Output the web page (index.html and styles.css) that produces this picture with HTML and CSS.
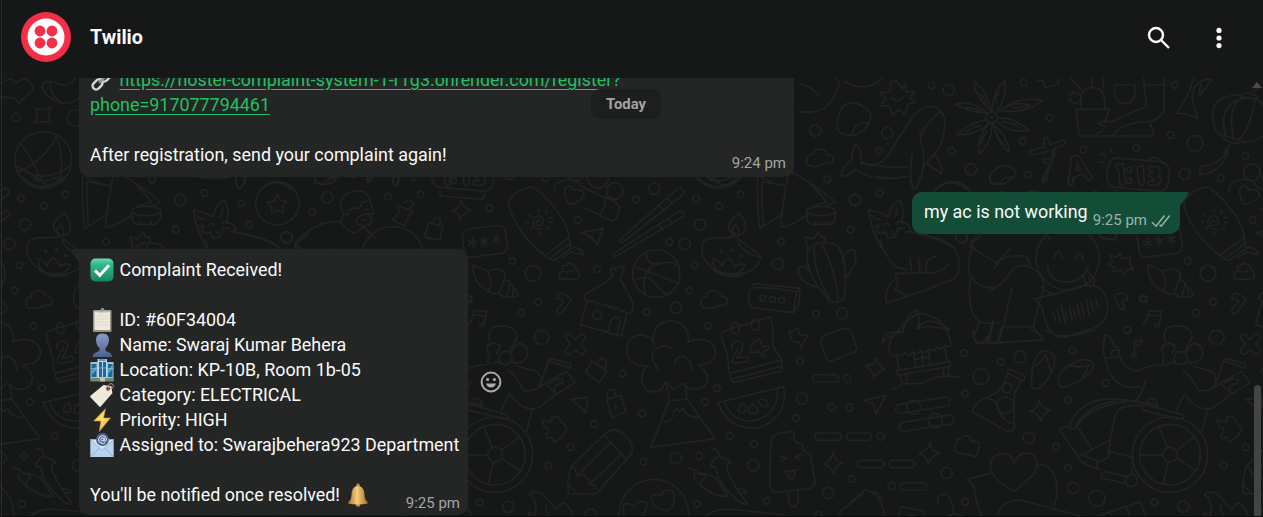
FILE: index.html
```html
<!DOCTYPE html>
<html lang="en">

<head>
    <meta charset="UTF-8">
    <meta name="viewport" content="width=device-width, initial-scale=1.0">
    <title>Twilio</title>
    <link rel="stylesheet" href="styles.css">
</head>

<body>
    <div class="chat">
        <header class="chat-header">
            <svg class="avatar" viewBox="0 0 50 50">
                <circle cx="25" cy="25" r="25" fill="#f22f46" />
                <circle cx="25" cy="25" r="18.5" fill="#fff" />
                <g fill="#f22f46">
                    <circle cx="19" cy="19" r="5.4" />
                    <circle cx="31" cy="19" r="5.4" />
                    <circle cx="19" cy="31" r="5.4" />
                    <circle cx="31" cy="31" r="5.4" />
                </g>
            </svg>
            <div class="chat-name">Twilio</div>
            <svg class="icon icon-search" viewBox="0 0 24 24">
                <circle cx="9" cy="9" r="7" />
                <path d="M14 14l8 8" />
            </svg>
            <svg class="icon icon-menu" viewBox="0 0 6 22">
                <circle cx="3" cy="3.4" r="2.6" />
                <circle cx="3" cy="11" r="2.6" />
                <circle cx="3" cy="18.6" r="2.6" />
            </svg>
        </header>

        <main class="chat-body">
            <!-- doodle wallpaper, one tile repeated every 675px -->
            <svg class="wallpaper" viewBox="0 78 1263 439">
                <defs>
                    <g id="tile">
                        <!-- middle: surfboard, ball, lamp, cactus -->
                        <g transform="translate(460 170) scale(.33333)">
                            <rect x="9" y="172" width="130" height="84" rx="20" transform="rotate(-7 74 214)" />
                            <path d="M38 205v28M26 212l24 14M26 226l24-14M73 200v28M61 207l24 14M61 221l24-14M109 194v28M97 201l24 14M97 215l24-14" />
                            <path d="M148 92Q165 65 205 52Q220 48 235 62Q305 125 325 185L333 235L285 270Q268 272 255 256Q185 205 155 130Q143 107 148 92ZM255 256L325 205M270 265L330 222M330 235Q355 225 372 253Q350 255 335 245L310 262" />
                            <path d="M240 155q-8-8-12 2q2 15 17 8q12-14-3-26q-22-5-24 17q4 26 28 21M238 117v9M262 124l-5 8M276 141l-9 4M278 158l-9-1M270 180l-7-7M238 185v10M212 180l6-8M198 157h9M205 133l8 6" />
                            <path d="M285 68Q275 40 310 32Q350 20 365 50L435 83Q480 95 477 120Q470 155 455 152L375 115M315 55Q330 38 342 60Q370 55 374 75Q365 95 328 104Q310 80 315 55M435 83Q440 110 422 128" />
                            <path d="M365 188L429 175L413 223L395 203ZM477 212L650 58Q665 48 673 66L668 75L488 217Q478 221 477 212ZM458 252L655 125Q675 118 673 138L470 258Q458 262 458 252ZM597 104l14 16M621 84l16 17M596 163l11 19M624 145l12 18" />
                            <circle cx="589" cy="311" r="71" />
                            <path d="M525 290L655 340M560 247Q560 290 600 281Q630 272 650 285M586 280Q535 320 558 375M525 330Q565 310 590 345Q605 370 625 372" />
                            <path d="M727 225Q730 200 785 203Q825 205 825 190Q810 193 805 170Q810 145 838 129Q860 155 856 178Q845 200 825 198M818 193Q810 178 828 165Q840 180 834 193M832 205Q865 230 902 256Q900 305 825 315Q750 310 728 255Q725 240 727 225M832 208Q840 245 900 262M760 265Q758 310 800 311Q850 315 855 283Q835 280 825 290Q818 270 803 263Q787 275 788 290Q775 270 760 265M760 298Q790 325 845 318" />
                            <circle cx="782" cy="243" r="3" />
                            <circle cx="814" cy="240" r="3" />
                            <circle cx="842" cy="257" r="3" />
                            <path d="M893 20Q890 120 900 175L963 135M905 35L978 48M905 35Q905 100 910 165M985 15Q970 80 962 170Q985 175 1040 135M985 0L1045 35L1127 95L1100 108M1045 35L1100 95L1055 110" />
                            <ellipse cx="1083" cy="123" rx="43" ry="14" />
                            <path d="M1040 123Q1038 164 1060 163H1108Q1130 158 1127 123M1068 153v10M1098 153v10" />
                            <path d="M1043 235L1036 200L1052 205L1062 205L1075 184L1083 200L1096 203L1092 220M1043 240Q1030 310 1110 393Q1135 405 1155 380Q1165 220 1110 220Q1065 210 1043 240M1062 230Q1060 310 1108 385M1085 225Q1125 290 1135 390M1050 305Q1030 280 1015 295Q1010 335 1075 353M1148 270Q1155 240 1180 238Q1205 270 1155 325" />
                            <path d="M38 292Q36 280 50 290Q65 295 80 302Q94 320 92 345L85 362Q45 350 38 292M80 305Q110 290 128 303Q142 315 130 335L118 370Q100 378 85 362M132 330Q150 330 150 345L140 380Q130 385 118 370M151 342Q165 350 158 380L140 380M165 355Q174 370 175 378L158 380" />
                            <path d="M297 325Q295 305 310 303Q302 290 315 285Q325 290 323 278Q345 282 350 300Q360 310 358 320Q352 333 297 325M310 303Q330 310 340 300" />
                            <path d="M378 392Q367 380 380 370L440 335L458 320L452 300Q458 285 466 302Q470 285 480 292Q495 285 492 302L480 325L517 395Q523 425 510 430L498 430Q490 415 485 425Q475 408 465 418Q455 405 447 412Q438 398 430 407Q420 395 410 402Q400 385 390 397ZM380 397L362 464L484 499L500 430M443 486L452 455Q460 435 478 445Q483 450 472 492" />
                            <circle cx="412" cy="435" r="13" />
                            <path d="M290 385Q290 365 310 372L335 388L308 425Q295 440 290 420L312 394L292 385M24 465Q35 460 42 422L80 424L72 468Q60 475 58 463L70 460M40 435L76 438" />
                            <path d="M724 405Q717 385 738 380Q740 360 762 363Q780 363 782 378Q803 378 803 395Q800 410 780 405Q765 418 745 413Q728 420 724 405" />
                            <path d="M876 345L890 341L1020 355L1016 405L1000 428L875 413Q863 405 868 360Q870 343 1010 365L1000 428M1010 365L1020 355" />
                            <circle cx="908" cy="384" r="9" />
                            <circle cx="937" cy="388" r="9" />
                            <circle cx="965" cy="391" r="9" />
                            <circle cx="89" cy="114" r="10" />
                            <circle cx="353" cy="149" r="10" />
                            <circle cx="464" cy="63" r="25" />
                            <circle cx="414" cy="22" r="32" />
                            <circle cx="583" cy="56" r="17" />
                            <circle cx="528" cy="88" r="10" />
                            <circle cx="708" cy="85" r="10" />
                            <circle cx="777" cy="108" r="10" />
                            <circle cx="842" cy="74" r="10" />
                            <circle cx="720" cy="164" r="17" />
                            <circle cx="628" cy="216" r="10" />
                            <circle cx="674" cy="222" r="17" />
                            <circle cx="157" cy="273" r="10" />
                            <circle cx="219" cy="310" r="24" />
                            <circle cx="411" cy="297" r="10" />
                            <circle cx="703" cy="286" r="10" />
                            <circle cx="963" cy="215" r="10" />
                            <circle cx="954" cy="282" r="17" />
                            <circle cx="1172" cy="178" r="10" />
                            <circle cx="1185" cy="90" r="17" />
                            <circle cx="1102" cy="28" r="10" />
                            <circle cx="688" cy="362" r="10" />
                            <circle cx="234" cy="396" r="10" />
                            <circle cx="184" cy="428" r="10" />
                            <circle cx="648" cy="413" r="17" />
                            <circle cx="560" cy="426" r="10" />
                            <circle cx="1068" cy="432" r="10" />
                            <circle cx="1147" cy="430" r="17" />
                            <circle cx="745" cy="468" r="10" />
                            <circle cx="27" cy="387" r="10" />
                            <path d="M710 20Q770 80 840 20M740 20Q775 45 815 20M890 0Q900 35 978 48" />
                        </g>
                        <!-- bottom: volcano, calendar, pencil, ice cream -->
                        <g transform="translate(460 330) scale(.33333)">
                            <path d="M233 2h24l12 20l-12 20h-24l-12-20ZM317 22Q310 12 330 12L346 28L362 12Q380 14 375 26L362 43L377 58Q375 74 362 73L346 58L330 73Q312 74 317 58L331 43Z" />
                            <path d="M395 93L440 123L418 157L377 127ZM413 97Q415 85 432 86Q445 92 436 110L430 117M440 208L483 195L497 245L455 263ZM443 205Q435 180 455 178Q468 185 466 198" />
                            <circle cx="467" cy="231" r="4" />
                            <path d="M563 107Q510 110 500 65Q500 15 545 15Q580 20 582 45Q570 -20 630 -28Q690 -20 685 35Q740 15 765 55Q775 100 715 105M560 107Q530 150 560 180Q600 200 617 155M717 107Q760 140 730 170Q695 190 667 160L640 178L618 155L628 212L572 352L766 326L680 207L677 160M597 120Q560 75 590 55Q610 42 635 55M643 98Q650 78 670 80Q695 88 695 120M628 213L680 207M612 275Q635 280 643 242Q650 230 658 245Q670 225 675 248Q690 262 715 263" />
                            <path d="M785 25Q780 5 800 0L930 -40Q945 0 937 45L965 90Q970 120 960 125L820 158Q805 130 803 80ZM807 130L967 90M812 148L960 110" />
                            <path d="M817 55Q810 35 835 33Q855 38 845 60L830 85L862 78Q870 90 860 95L825 100Q812 98 820 82L835 55M878 40L898 25L908 52L925 48Q930 60 910 64L915 80Q905 87 899 66L872 68Q868 58 878 40" />
                            <path d="M775 218L971 170Q985 260 900 292Q805 305 775 218M795 218Q815 275 880 273Q955 255 953 180M838 245Q828 230 850 220Q865 240 850 249ZM870 250Q862 230 878 222Q905 240 885 252ZM900 222Q890 208 905 207Q925 210 923 228Q910 235 900 222" />
                            <path d="M332 208L381 202Q382 220 377 249L360 230ZM247 270L268 276Q280 275 275 258L295 262L320 295Q318 315 283 337L275 322Q255 330 258 312Q270 310 265 295Q250 295 247 270" />
                            <path d="M325 492Q320 450 333 410L432 315Q460 285 495 315Q525 345 515 370L408 492ZM333 410Q350 415 350 438Q380 425 388 460Q408 465 408 475M325 465L352 492M358 430L455 335M388 463L485 372M432 315L500 390" />
                            <circle cx="582" cy="552" r="104" />
                            <path d="M490 530Q490 510 523 530Q535 505 560 520Q565 550 515 580Q485 560 490 530M575 515Q565 490 603 495Q615 470 642 487Q650 525 623 542Q590 540 575 515" />
                            <path d="M685 415Q705 415 715 430Q745 430 768 445L805 500Q760 500 720 465Q700 450 702 430M715 430Q740 435 735 445Q720 450 725 462M755 355Q775 355 777 380Q800 385 814 400Q795 395 803 425Q825 475 862 520Q850 530 820 500Q775 460 765 410L752 410Q755 385 777 380M830 475Q855 475 860 487L840 490" />
                            <path d="M932 340Q935 305 975 308Q1005 300 1003 312Q998 325 1010 340Q1030 335 1028 355Q1035 370 1050 372L1065 450Q1065 475 1045 476L950 487Q930 485 930 460ZM985 485L988 520Q1000 540 1014 520V482M960 377L978 385L962 393M1023 373L1006 382L1023 388M973 425L1012 420M980 427Q980 447 995 447Q1005 443 1003 423M990 430v8" />
                            <path d="M1118 367Q1125 395 1148 398Q1125 405 1122 434Q1112 405 1087 402Q1115 395 1118 367M1085 45Q1078 25 1095 15L1155 -5Q1170 -10 1175 10L1190 55Q1190 65 1175 70L1115 93Q1105 95 1100 85ZM987 5L1015 -5L1018 15L1044 15L1022 53L1018 37L997 33Z" />
                            <rect x="1058" y="134" width="78" height="22" rx="11" />
                            <rect x="1065" y="309" width="78" height="22" rx="11" />
                            <rect x="1159" y="309" width="76" height="22" rx="11" />
                            <path d="M208 495Q220 480 245 492Q265 510 290 540Q295 525 310 518Q335 535 342 565M210 495Q235 510 225 565L208 545L204 565M260 525Q250 545 275 565" />
                            <path d="M735 560Q765 530 835 540L975 555M1140 560V545L1210 490" />
                            <circle cx="487" cy="130" r="10" />
                            <circle cx="546" cy="250" r="10" />
                            <circle cx="403" cy="282" r="10" />
                            <circle cx="332" cy="352" r="10" />
                            <circle cx="266" cy="407" r="10" />
                            <circle cx="59" cy="517" r="10" />
                            <circle cx="145" cy="530" r="17" />
                            <circle cx="393" cy="553" r="17" />
                            <circle cx="550" cy="395" r="10" />
                            <circle cx="647" cy="384" r="17" />
                            <circle cx="717" cy="378" r="10" />
                            <circle cx="710" cy="522" r="10" />
                            <circle cx="735" cy="216" r="10" />
                            <circle cx="771" cy="175" r="10" />
                            <circle cx="809" cy="317" r="10" />
                            <circle cx="882" cy="343" r="10" />
                            <circle cx="879" cy="407" r="17" />
                            <circle cx="921" cy="513" r="10" />
                            <circle cx="1020" cy="95" r="10" />
                            <circle cx="1026" cy="206" r="17" />
                            <circle cx="1009" cy="264" r="10" />
                            <circle cx="1115" cy="232" r="11" />
                            <circle cx="1169" cy="232" r="11" />
                            <circle cx="1161" cy="146" r="11" />
                            <circle cx="1174" cy="447" r="10" />
                            <circle cx="1105" cy="489" r="17" />
                            <circle cx="1076" cy="555" r="10" />
                            <ellipse cx="826" cy="-5" rx="12" ry="17" />
                            <ellipse cx="886" cy="-16" rx="12" ry="17" />
                        </g>
                        <!-- bottom right: beach hut, flask, flip-flops, wheelchair -->
                        <g transform="translate(850 330) scale(.33333)">
                            <path d="M118 60Q112 30 150 -5Q185 -45 210 -50Q290 -40 303 40Q300 58 285 45Q275 65 262 52Q250 70 238 57Q225 75 213 60Q200 80 190 65Q175 85 165 68Q150 85 140 72Q120 90 118 60M140 78L147 118M285 55L292 95M190 68L198 110M215 62L220 105M235 60L240 102M193 88L240 80M140 122L300 95V110L143 135ZM150 135L156 162M167 132L172 158M278 115L282 137M293 112L297 135M127 176Q145 178 155 160Q205 163 220 158Q260 130 330 142" />
                            <path d="M95 40Q100 0 160 5Q120 10 95 40M160 0Q170 -50 200 -60Q215 -20 200 -5M205 -5Q230 -50 300 0Q250 -15 205 -5" />
                            <path d="M45 107L68 103L80 85Q83 105 103 118Q82 122 72 142Q65 115 45 107M43 211L107 196L78 253L70 223ZM241 338Q243 362 268 370Q242 378 235 402Q228 375 206 370Q235 362 241 338M567 211Q573 237 602 240Q580 247 573 273Q565 247 538 244Q565 237 567 211" />
                            <rect x="136" y="212" width="165" height="27" rx="13" transform="rotate(-9 218 226)" />
                            <circle cx="191" cy="232" r="21" />
                            <rect x="147" y="266" width="166" height="27" rx="13" transform="rotate(-9 230 280)" />
                            <circle cx="256" cy="272" r="21" />
                            <path d="M318 340Q320 325 333 325Q335 312 360 320L362 332L390 338L380 380L320 367Q310 362 318 340" />
                            <path d="M480 118L520 135Q528 145 520 153L473 130Q470 120 480 118M473 133Q455 180 440 188Q370 215 367 245L470 303Q490 308 493 290V190Q510 165 510 150M410 205Q440 205 447 245Q465 280 492 280" />
                            <circle cx="472" cy="174" r="14" />
                            <circle cx="466" cy="226" r="25" />
                            <path d="M545 165Q543 65 585 63Q625 65 610 115Q580 175 560 177Q545 178 545 165M553 110Q575 95 587 75L603 125M625 155Q625 115 690 90Q725 85 732 105Q725 140 650 170Q625 175 625 155M660 107Q690 115 720 105M715 107L695 150" />
                            <path d="M422 420Q415 370 465 370Q490 380 492 403Q500 365 540 370Q575 390 550 435L493 483Q435 455 422 420M422 430L352 447L372 470Q380 540 400 560M562 404Q625 400 620 500L612 530M443 560Q450 510 510 510L700 560" />
                            <path d="M395 40Q370 45 370 0M395 40Q410 40 415 20L430 -30M411 40L578 30Q575 10 540 0M442 38L455 -10M590 0Q625 35 740 0" />
                            <rect x="23" y="391" width="79" height="22" rx="11" />
                            <rect x="116" y="391" width="79" height="22" rx="11" />
                            <rect x="151" y="458" width="79" height="22" rx="11" />
                            <path d="M0 520L45 480Q80 480 105 550L95 560M65 487L80 487L95 510M145 560L153 530L222 543L220 560M178 555h15M265 520Q255 495 285 492Q305 500 312 553M290 560Q315 545 340 560M738 560L870 515L890 560M780 543l8 17M828 528l12 32" />
                            <!-- person in the wheelchair -->
                            <circle cx="960" cy="374" r="113" />
                            <circle cx="960" cy="374" r="91" />
                            <circle cx="960" cy="374" r="22" />
                            <path d="M952 352L928 295M978 362L1032 323M980 385L1034 420M955 397L940 460M938 376H870" />
                            <path d="M765 85Q755 60 765 15Q780 10 793 50Q810 50 807 70Q815 110 860 124Q910 100 940 105M765 85Q785 185 870 170M887 150Q880 185 855 217M787 75Q780 70 785 62L803 60M770 85L805 80M1027 108L1085 125Q1105 140 1095 165M1000 120Q1025 140 1045 180Q1070 190 1110 160M1003 192Q1050 255 1095 230L1140 195M1003 192L978 243M1073 235L1055 305" />
                            <path d="M945 105Q930 90 945 75Q930 60 940 45Q955 35 975 45Q975 60 965 70M945 35Q935 0 960 -10Q1020 -20 1027 20L1005 65M1008 65Q1025 40 1035 40Q1060 45 1058 75Q1045 105 1013 97L1010 90M950 105Q965 90 975 100" />
                            <circle cx="992" cy="84" r="20" />
                            <path d="M1097 162L1120 92L1185 115Q1190 103 1183 100L1130 86Q1120 85 1122 95M1110 160L1175 124L1200 158L1145 192ZM1125 160Q1145 140 1165 150Q1165 165 1148 162Q1135 170 1140 190" />
                            <path d="M657 290Q690 200 800 208Q870 212 895 225M675 292Q710 225 800 212M875 225Q875 240 885 242L990 267Q1005 265 1000 255L885 223ZM890 217L923 227Q920 205 905 205Q890 205 890 217M627 297L645 290L675 297Q720 225 830 215M627 297L685 380L780 330L795 260Q800 225 870 225M687 297L725 357M780 330L775 382L740 398L740 412M685 385Q710 410 750 418M705 377L745 395M780 365L850 382M755 430L765 425L830 440M760 445Q752 440 755 430M760 445L828 460M850 382L845 432" />
                            <circle cx="844" cy="452" r="18" />
                            <path d="M853 75V37L875 30V42L855 50" />
                            <circle cx="852" cy="75" r="7" />
                            <circle cx="343" cy="69" r="10" />
                            <circle cx="452" cy="96" r="10" />
                            <circle cx="510" cy="81" r="18" />
                            <circle cx="393" cy="140" r="24" />
                            <circle cx="345" cy="191" r="10" />
                            <circle cx="667" cy="61" r="10" />
                            <circle cx="767" cy="159" r="10" />
                            <circle cx="654" cy="210" r="10" />
                            <circle cx="536" cy="324" r="17" />
                            <circle cx="618" cy="350" r="10" />
                            <circle cx="654" cy="413" r="10" />
                            <circle cx="669" cy="474" r="17" />
                            <circle cx="741" cy="505" r="24" />
                            <circle cx="914" cy="517" r="10" />
                            <circle cx="345" cy="516" r="10" />
                            <circle cx="290" cy="429" r="17" />
                            <circle cx="125" cy="468" r="11" />
                            <circle cx="92" cy="320" r="11" />
                            <circle cx="832" cy="0" r="10" />
                        </g>
                        <!-- top right: whale, flower, clock, lantern -->
                        <g transform="translate(800 70) scale(.33333)">
                            <path d="M290 33L307 57L318 40V65L345 66L328 83L347 98L323 102L316 135L297 118L275 136L270 108L240 107L258 85L240 68L270 66L272 35ZM275 82L292 94L312 80" />
                            <path d="M145 100Q165 93 190 110Q215 120 212 145L205 165Q175 200 155 196Q105 195 112 160Q115 110 145 100M205 160Q165 150 155 195" />
                            <path d="M122 318Q130 285 155 270Q155 240 167 223Q190 245 182 275Q235 300 265 255Q300 195 335 145Q365 105 405 110Q445 125 430 195Q425 230 405 250L370 290Q360 355 340 355Q325 330 337 250M360 205Q375 160 420 125M360 205Q375 250 370 290M400 255Q430 275 425 312L383 282M122 318Q150 320 165 298Q225 340 325 318M182 280Q255 295 325 290" />
                            <path d="M575 125Q520 75 523 35Q560 60 575 125Q580 60 615 32Q620 90 588 128M600 125Q650 75 727 92Q680 130 612 123M560 128Q520 130 465 103Q520 90 560 128M560 150Q510 155 470 195Q530 195 568 160Q530 200 537 252Q575 220 577 160Q625 200 627 247Q590 220 580 160M592 145Q640 140 687 182Q630 190 592 155M535 70Q550 75 560 105M600 65Q582 80 590 100M625 110Q645 95 690 105Q660 115 635 113M500 112Q520 112 550 128M495 185Q510 175 540 168M545 225Q545 200 562 185M590 190Q595 210 615 225M610 155Q640 160 660 172" />
                            <circle cx="575" cy="142" r="17" />
                            <circle cx="575" cy="142" r="3" />
                            <path d="M20 275Q20 253 40 252Q45 235 65 238Q80 245 82 255Q103 255 100 275Q85 283 65 282Q45 295 30 288Q18 285 20 275M570 325Q567 305 585 300Q595 283 625 288L635 295Q650 300 648 315Q635 330 615 322Q600 345 585 340Q570 340 570 325" />
                            <path d="M828 118H928L915 155M828 118L837 198H1062L1050 155M843 115V75Q860 45 895 55Q915 65 915 115M812 25L848 65M875 25V50M910 25V55M943 45H1005Q1010 100 975 100Q940 100 943 45M1030 25L1040 108L935 155Q905 150 895 160L915 170Q910 185 890 190M1035 45L1090 45M1093 25V100Q1095 150 1040 155Q960 160 940 195M1130 130Q1165 85 1180 25M1130 130Q1160 130 1195 145Q1170 90 1180 60M1180 60Q1200 20 1235 30L1200 75Q1195 55 1205 40" />
                            <circle cx="826" cy="84" r="16" />
                            <path d="M805 70l8 4M803 92l8-2M818 63l3 7M710 30L728 32L735 53L775 42V22M0 40Q35 50 60 80M0 125Q95 140 118 38Q115 25 100 20M135 35Q200 70 245 25" />
                            <path d="M730 205Q737 200 743 205L750 225L790 210Q803 215 790 225L765 235Q765 260 745 300L740 330Q730 345 725 330L750 285L730 275Q725 265 735 265L755 270L760 240L700 255Q685 253 690 243L735 230ZM805 340L815 260Q830 250 840 262L875 320Q870 340 860 325L850 312L825 320L818 345Q808 350 805 340M827 300L832 280L842 300Z" />
                            <rect x="922" y="270" width="185" height="88" rx="28" transform="rotate(5 1014 314)" />
                            <path d="M948 292Q943 280 970 282L976 340Q963 355 960 340L955 300ZM1010 292L1030 285L1033 340Q1020 355 1017 340L1012 303ZM1045 290H1070Q1088 300 1075 315Q1090 335 1070 347L1045 345V335L1062 332L1045 315L1060 305L1045 300Z" />
                            <circle cx="987" cy="300" r="8" />
                            <circle cx="987" cy="332" r="8" />
                            <path d="M1048 268Q1060 258 1080 268L1082 276M903 250l17 12M930 232l8 18M895 277h20M945 360V378L1075 388L1080 370M405 362Q455 310 515 370" />
                            <path d="M1325 75Q1235 75 1238 135Q1240 195 1275 200M1325 75Q1330 65 1345 70L1370 78V88L1325 80ZM1325 82Q1290 110 1295 165L1300 205M1335 85Q1280 90 1270 150L1275 195M1365 90Q1350 180 1315 210M1370 88Q1410 115 1410 160Q1395 220 1325 215M1272 195L1315 210V222Q1290 220 1272 205ZM1290 222L1280 245Q1265 280 1200 290V313Q1260 310 1283 250M1360 65L1380 50" />
                            <circle cx="1278" cy="245" r="6" />
                            <circle cx="394" cy="46" r="10" />
                            <circle cx="446" cy="60" r="17" />
                            <circle cx="46" cy="182" r="17" />
                            <circle cx="262" cy="189" r="17" />
                            <circle cx="237" cy="242" r="10" />
                            <circle cx="82" cy="328" r="10" />
                            <circle cx="239" cy="369" r="10" />
                            <circle cx="359" cy="189" r="2" />
                            <circle cx="455" cy="243" r="10" />
                            <circle cx="513" cy="298" r="17" />
                            <circle cx="671" cy="38" r="10" />
                            <circle cx="749" cy="143" r="10" />
                            <circle cx="668" cy="213" r="10" />
                            <circle cx="683" cy="314" r="10" />
                            <circle cx="850" cy="239" r="10" />
                            <circle cx="1009" cy="234" r="10" />
                            <circle cx="1125" cy="45" r="10" />
                            <circle cx="1112" cy="195" r="10" />
                            <circle cx="1185" cy="220" r="24" />
                            <circle cx="1154" cy="312" r="17" />
                            <circle cx="1336" cy="257" r="10" />
                            <circle cx="1262" cy="325" r="10" />
                            <circle cx="1355" cy="307" r="25" />
                        </g>
                        <!-- right: fox tail, kneeling person, smiley -->
                        <g transform="translate(880 170) scale(.33333)">
                            <path d="M75 185Q190 200 225 235Q250 285 225 325Q130 365 20 400Q10 350 50 325Q35 305 80 310L130 308Q175 315 205 285M50 335Q60 350 45 360L80 375M90 265L95 305M115 265L120 305M140 305Q130 265 170 260" />
                            <path d="M0 210Q10 250 45 290L80 300" />
                            <path d="M268 228L350 280L390 235M268 228L310 190M355 280L340 297M275 240Q260 280 270 320Q310 365 350 350Q375 335 395 300Q440 265 485 320Q500 350 480 390L460 470M270 330Q260 430 300 455Q335 465 360 455M355 275Q380 250 440 260L450 285M395 355L370 470L460 470L490 510L325 520L340 460M300 455L280 500Q285 525 305 520L320 500M330 365L350 350M370 470L355 518M480 350L520 375" />
                            <circle cx="563" cy="265" r="95" />
                            <path d="M522 262Q535 230 547 262M585 270Q600 230 611 270M503 285Q505 330 545 335Q600 345 625 290M610 318Q615 345 632 350Q650 345 640 325L625 305M625 320l8 15" />
                            <path d="M462 387Q540 370 600 350Q665 335 680 390Q695 450 640 475L560 500Q515 510 495 450L485 410ZM520 430l6 20M532 418l10 38M543 405l14 57M556 425l6 25M568 410l9 42M580 420l7 25M591 402l10 42M603 395l10 45M618 385l10 50M633 395l8 30M648 388l6 25" />
                            <path d="M720 250L728 265L752 262L748 280L760 297L740 298L733 315L720 300L700 307L702 290L683 283L698 272L690 255L710 262Z" />
                            <path d="M703 375L730 368Q748 375 740 390L725 395L735 410Q730 422 720 415Z" />
                            <path d="M655 190L665 205L705 210L710 190" />
                            <circle cx="788" cy="386" r="10" />
                            <circle cx="742" cy="481" r="10" />
                            <circle cx="245" cy="203" r="17" />
                        </g>
                        <!-- left: globe, fox head, star, pins -->
                        <g transform="translate(0 160) scale(.33333)">
                            <circle cx="130" cy="0" r="85" />
                            <path d="M55 35Q140 0 170 -75M60 -50Q115 20 114 53Q135 80 165 75M170 -70Q200 20 170 70M50 20L110 50M125 50Q170 45 210 20" />
                            <circle cx="114" cy="53" r="9" />
                            <path d="M620 265Q590 215 580 150Q600 150 640 170Q650 125 675 122Q690 150 680 185Q700 190 708 210L700 215Q800 235 838 265M590 165Q600 180 615 178M660 170L670 145M598 200L612 195L605 215Q625 225 630 215L640 235L660 230L668 205L690 205M625 195Q635 185 642 195M665 190Q675 180 682 190M650 215l5 8" />
                            <circle cx="832" cy="130" r="65" />
                            <path d="M832 103L842 122L861 125L847 140L850 158L830 150L815 160L815 142L802 128L822 123Z" />
                            <path d="M885 250Q945 180 1020 185Q1045 215 1065 220L1090 200L1125 235M1030 160Q1010 120 1045 100Q1090 80 1110 115Q1105 125 1085 128Q1080 150 1070 145Q1045 140 1045 165ZM1030 165L1022 185M1110 120L1122 160L1105 165Q1120 175 1115 190Q1090 205 1070 190Q1065 175 1085 165L1115 160M1085 180h15M1090 150q10-5 15 0M885 250L900 265" />
                            <path d="M1192 135L1240 155L1228 165L1213 198L1178 180L1198 155ZM1215 130Q1230 110 1240 130L1230 150M1383 122Q1388 145 1412 150Q1390 158 1380 178Q1375 155 1357 152Q1380 145 1383 122M1285 188L1328 200L1320 240L1275 230ZM1300 185Q1305 165 1318 175Q1325 185 1318 195" />
                            <path d="M945 50Q940 75 965 72Q1000 75 1010 52M1100 68L1115 50M1180 52Q1175 75 1190 75L1195 52M705 52Q710 90 722 85Q735 70 732 52M610 50Q650 60 690 50" />
                            <circle cx="457" cy="58" r="10" />
                            <circle cx="614" cy="99" r="10" />
                            <circle cx="541" cy="120" r="17" />
                            <circle cx="723" cy="130" r="10" />
                            <circle cx="747" cy="194" r="10" />
                            <circle cx="527" cy="209" r="10" />
                            <circle cx="860" cy="231" r="17" />
                            <circle cx="937" cy="155" r="10" />
                            <circle cx="982" cy="112" r="17" />
                            <circle cx="1163" cy="110" r="10" />
                            <circle cx="1262" cy="104" r="10" />
                        </g>
                        <!-- top left: cap, rugby ball, sparkle -->
                        <g transform="scale(.33333)">
                            <path d="M0 250L35 235L45 250L75 235Q105 260 98 270L55 310L45 295L0 290M125 260Q140 300 190 310Q230 310 240 290M125 260Q130 240 160 245Q200 270 225 235M150 245Q150 290 190 310M107 325Q130 335 153 320Q140 345 153 368Q130 360 103 370Q117 345 107 325" />
                            <circle cx="48" cy="352" r="12" />
                            <circle cx="225" cy="354" r="24" />
                        </g>
                    </g>
                </defs>
                <use href="#tile" x="-675" />
                <use href="#tile" />
                <use href="#tile" x="675" />
            </svg>

            <div class="messages">
                <div class="message message-in message-wide">
                    <div class="message-text"><svg class="emoji" viewBox="0 0 24 24">
                            <g fill="none" stroke="#d5d8d8" stroke-width="2.4">
                                <rect x="-5.5" y="-3.6" width="11" height="7.2" rx="3.6" transform="translate(7.5 16.5) rotate(-45)" />
                                <rect x="-5.5" y="-3.6" width="11" height="7.2" rx="3.6" transform="translate(15.5 8.5) rotate(-45)" />
                                <path d="M9 15l6-6" stroke="#8c9090" />
                            </g>
                        </svg><a class="link">https://hostel-complaint-system-1-r1g3.onrender.com/register?<br>phone=917077794461</a><br><br>After registration, send your complaint again!</div>
                    <div class="message-meta">9:24 pm</div>
                </div>

                <div class="message message-out">
                    <svg class="tail tail-out" viewBox="0 0 9 14">
                        <path d="M0 0h7.500q2 .3 .8 2L0 13.500z" />
                    </svg>
                    <div class="message-text">my ac is not working</div>
                    <div class="message-meta">9:25 pm
                        <svg class="ticks" viewBox="0 0 20 14">
                            <path d="M1 8.200l4 4L13.500 1.500M8.600 10.700l1.600 1.500L18.800 1.500" />
                        </svg>
                    </div>
                </div>

                <div class="message-row">
                    <div class="message message-in">
                        <svg class="tail tail-in" viewBox="0 0 9 14">
                            <path d="M9 0H1.500q-2 .3-.8 2L9 13.500z" />
                        </svg>
                        <div class="message-text"><svg class="emoji" viewBox="0 0 24 24">
                                <defs>
                                    <linearGradient id="green" x2="0" y2="1">
                                        <stop stop-color="#67dfb9" />
                                        <stop offset=".25" stop-color="#34b98a" />
                                        <stop offset="1" stop-color="#168461" />
                                    </linearGradient>
                                </defs>
                                <rect x=".5" y=".5" width="23" height="23" rx="5" fill="url(#green)" />
                                <path d="M5 12.500l4.800 4.800L19 7.300" fill="none" stroke="#fff" stroke-width="3" />
                            </svg>Complaint Received!<br><br><svg class="emoji" viewBox="0 0 24 24">
                                <rect x="3" y="2" width="18.500" height="22" rx="1" fill="#9a9583" />
                                <path d="M4.500 3.500h15.500v18.500H4.500z" fill="#eceadb" />
                                <path d="M6 8h12.500M6 11h12.500M6 14h12.500M6 17h12.500" stroke="#d9d7c6" stroke-width=".8" />
                                <path d="M7.500 4.500V2.500h3q0-2.500 2-2.500t2 2.500h3v2z" fill="#aeb4bb" />
                                <circle cx="12.500" cy="2" r=".8" fill="#555" />
                            </svg>ID: #60F34004<br><svg class="emoji" viewBox="0 0 24 24">
                                <defs>
                                    <linearGradient id="person" x2="0" y2="1">
                                        <stop stop-color="#8d9bc4" />
                                        <stop offset="1" stop-color="#4c608f" />
                                    </linearGradient>
                                </defs>
                                <path d="M12.500.500c5 0 7 3.500 6.300 8-.4 3.500-2 5.300-3.300 6.500v2.500c1 1.500 6.500 1.500 6.500 6.500H2.800c0-5 5.700-5 6.700-6.500V15C8 13.800 6.500 12 6.200 8.500 5.500 4 7.500.500 12.500.500z" fill="url(#person)" />
                            </svg>Name: Swaraj Kumar Behera<br><svg class="emoji" viewBox="0 0 24 24">
                                <path d="M.5 4h23v19H.5z" fill="#a7bfce" />
                                <path d="M7.500 1h9.500v22H7.500z" fill="#bfd3dd" />
                                <path d="M1.500 6h5v13h-5zM18 6h4.500v13H18zM9 4h3v15H9zM13 4h3v15h-3z" fill="#176aa0" />
                                <path d="M1.500 13l5-5v4l-5 5zM18 12l4.500-5v4L18 16z" fill="#4da6ce" />
                                <path d="M1 10.500h6M17.500 10.500h6M9 10h7" stroke="#8abad2" stroke-width=".8" />
                                <path d="M9 1.300h6.500v1.500H9z" fill="#3b8bb0" />
                                <path d="M.5 20h23v3.500H.5z" fill="#72866a" />
                                <path d="M10 19h5v4.500h-5z" fill="#c3beac" />
                            </svg>Location: KP-10B, Room 1b-05<br><svg class="emoji" viewBox="0 0 24 24">
                                <path d="M.5 12.700L13.500 2l8 1.200 .8 7L11 23.200q-1 1-2 0L.7 14.500q-.8-1-.2-1.800z" fill="#efe9dc" />
                                <circle cx="18.200" cy="5.500" r="2.200" fill="#9e4942" />
                                <circle cx="18.200" cy="5.500" r="1" fill="#333" />
                                <path d="M18.500 5.500C17 1 21 0 22.500 1.200s1 4-1.500 4.800" fill="none" stroke="#aaa" stroke-width="1" />
                            </svg>Category: ELECTRICAL<br><svg class="emoji" viewBox="0 0 24 24">
                                <defs>
                                    <linearGradient id="gold" x2="1" y2="1">
                                        <stop stop-color="#f2b533" />
                                        <stop offset=".5" stop-color="#ffe27a" />
                                        <stop offset="1" stop-color="#d88a1f" />
                                    </linearGradient>
                                </defs>
                                <path d="M15.500.800L3.700 13h7.200L9.300 23.500 20.500 10h-7z" fill="url(#gold)" stroke="#d8902c" stroke-width=".6" />
                            </svg>Priority: HIGH<br><svg class="emoji" viewBox="0 0 24 24">
                                <path d="M.3 6.500h23.400V24H.3z" fill="#b9d3ef" />
                                <path d="M.5 23.800L9.500 15M23.500 23.800L14.500 15" stroke="#7fa3cc" stroke-width=".8" />
                                <path d="M.3 6.500L12 17 23.700 6.500z" fill="#d3e4f6" stroke="#88a9cd" stroke-width=".7" />
                                <circle cx="12.500" cy="6.500" r="6.500" fill="#4d6594" />
                                <circle cx="12.500" cy="6.500" r="1.600" fill="none" stroke="#fff" stroke-width="1" />
                                <path d="M14.200 4.800v2.500q.3 1.200 1.400.8 1-.8.8-2.200-.7-3.200-3.900-3.300-3.700.2-4 3.900.3 3.700 4 4 1.300 0 2.500-.7" fill="none" stroke="#fff" stroke-width=".9" />
                            </svg>Assigned to: Swarajbehera923 Department<br><br>You'll be notified once resolved! <svg class="emoji emoji-last" viewBox="0 0 24 24">
                                <defs>
                                    <linearGradient id="bell" x2="1" y2="0">
                                        <stop stop-color="#a96923" />
                                        <stop offset=".45" stop-color="#f5d07e" />
                                        <stop offset="1" stop-color="#a5611c" />
                                    </linearGradient>
                                </defs>
                                <circle cx="12" cy="2.500" r="2" fill="#b5813b" />
                                <circle cx="12" cy="21.500" r="2.300" fill="#c98c38" />
                                <path d="M12 3c4.500 0 6.300 4 6.500 9 .2 4.500 2 6 3.700 7.800Q22 21.500 12 21.500T1.800 19.800C3.500 18 5.300 16.500 5.500 12 5.700 7 7.500 3 12 3z" fill="url(#bell)" />
                            </svg></div>
                        <div class="message-meta">9:25 pm</div>
                    </div>
                    <button class="react-button">
                        <svg viewBox="0 0 22 22">
                            <circle cx="11" cy="11" r="9.400" />
                            <circle class="fill" cx="7.600" cy="8.500" r="1.600" />
                            <circle class="fill" cx="14.400" cy="8.500" r="1.600" />
                            <path class="fill" d="M6 12.500h10q-1.300 4-5 4t-5-4z" />
                        </svg>
                    </button>
                </div>
            </div>

            <div class="date-pill">Today</div>
            <div class="scroll-arrow"></div>
            <div class="scroll-thumb"></div>
        </main>
    </div>
</body>

</html>
```
FILE: styles.css
```css
* {
    box-sizing: border-box;
}

body {
    margin: 0;
    background-color: #161717;
    color: #fafafa;
    font-family: Roboto, "Liberation Sans", sans-serif;
}

.chat {
    height: 517px;
    display: flex;
    flex-direction: column;
    overflow: hidden;
}

.chat-header {
    height: 78px;
    flex: none;
    display: flex;
    align-items: center;
    padding: 0 41px 4px 21px;
    background-color: #161717;
}

.avatar {
    width: 50px;
    height: 50px;
}

.chat-name {
    flex: 1;
    margin-left: 19px;
    font-size: 19.7px;
    font-weight: 700;
}

.icon {
    position: relative;
    top: 1px;
}

.icon-search {
    width: 24px;
    height: 24px;
    fill: none;
    stroke: #fafafa;
    stroke-width: 2.4;
}

.icon-menu {
    width: 6px;
    height: 22px;
    margin-left: 45px;
    fill: #fafafa;
}

.chat-body {
    flex: 1;
    min-height: 0;
    position: relative;
    overflow: hidden;
    border-bottom: 1px solid #0b0c0c;
}

.wallpaper {
    position: absolute;
    top: 0;
    left: 0;
    width: 1263px;
    height: 439px;
    fill: none;
    stroke: #222424;
    stroke-width: 5;
    stroke-linecap: round;
    stroke-linejoin: round;
}

.messages {
    height: 100%;
    position: relative;
    display: flex;
    flex-direction: column;
    justify-content: flex-end;
    gap: 15px;
    padding: 0 83px 1px 79px;
}

/* text and time share one cell, the time sits in its bottom right corner */
.message {
    position: relative;
    display: grid;
    padding: 8px 8px 8px 11px;
    border-radius: 10px;
    font-size: 17.9px;
    line-height: 25px;
}

.message-in {
    background-color: #242626;
}

.message-row .message-in {
    width: 389px;
    border-top-left-radius: 0;
}

.message-wide {
    width: 715px;
    padding-bottom: 10px;
}

.message-out {
    align-self: flex-end;
    width: 268px;
    background-color: #144d37;
    border-top-right-radius: 0;
    padding: 7px 9px 10px 12px;
}

.message-row {
    display: flex;
    align-items: center;
    gap: 11px;
}

.message-text {
    grid-area: 1 / 1;
    white-space: nowrap;
}

.message-meta {
    grid-area: 1 / 1;
    place-self: end;
    display: flex;
    align-items: center;
    margin-bottom: -6px;
    font-size: 15px;
    line-height: 19px;
    color: #a3a4a4;
}

.message-out .message-meta {
    color: #9db3aa;
}

.link {
    color: #21c063;
    text-decoration: underline;
    text-underline-offset: 3px;
}

.emoji {
    width: 24px;
    height: 24px;
    margin: -4px 5.5px -4px 0;
    vertical-align: -1.5px;
}

.emoji-last {
    margin-left: 2px;
}

.ticks {
    width: 20px;
    height: 14px;
    margin-left: 4px;
    fill: none;
    stroke: #9db3aa;
    stroke-width: 1.5;
}

.tail {
    position: absolute;
    top: 0;
    width: 9px;
    height: 14px;
}

.tail-in {
    left: -9px;
    fill: #242626;
}

.tail-out {
    right: -9px;
    fill: #144d37;
}

.react-button {
    width: 24px;
    height: 24px;
    padding: 1px;
    border: 0;
    border-radius: 50%;
    background-color: #161717;
    box-shadow: 0 0 0 5px #161717;
}

.react-button svg {
    display: block;
    width: 22px;
    height: 22px;
    fill: none;
    stroke: #a9aaaa;
    stroke-width: 2;
}

.react-button .fill {
    fill: #a9aaaa;
    stroke: none;
}

.date-pill {
    position: absolute;
    top: 11px;
    left: 591px;
    width: 70px;
    height: 30px;
    border-radius: 9px;
    background-color: #1d1f1f;
    color: #a3a4a4;
    font-size: 14.8px;
    font-weight: 700;
    line-height: 30px;
    text-align: center;
}

.scroll-arrow {
    position: absolute;
    top: 4px;
    right: 1px;
    border: 5px solid transparent;
    border-top: 0;
    border-bottom: 6px solid #4a4b4b;
}

.scroll-thumb {
    position: absolute;
    top: 307px;
    right: 2px;
    width: 7px;
    height: 140px;
    border-radius: 4px;
    background-color: #434444;
}

.chat::before {
    content: "";
    position: absolute;
    top: 0;
    left: 1px;
    width: 1px;
    height: 517px;
    background-color: #2b2c2c;
    z-index: 1;
}
```
